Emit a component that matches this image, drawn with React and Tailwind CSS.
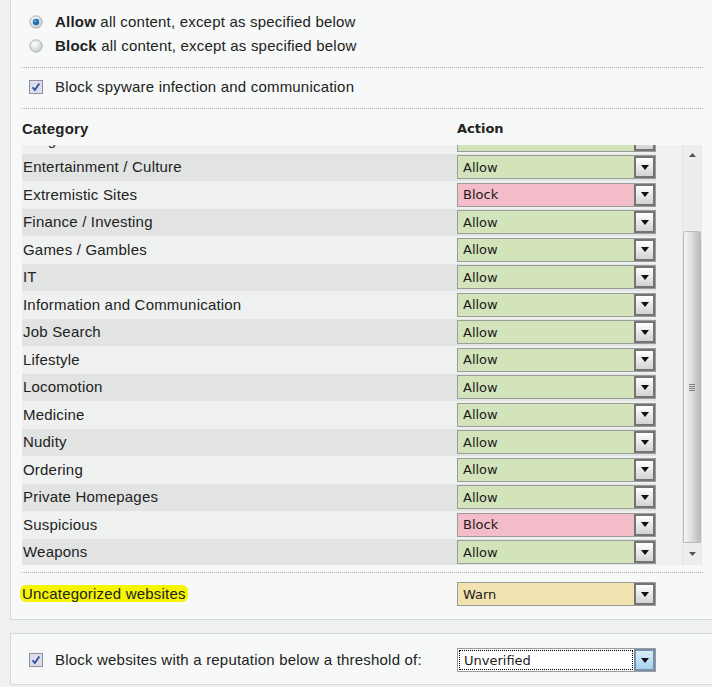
import React from 'react';

const rows = [
  ['Drugs', 'Allow'],
  ['Entertainment / Culture', 'Allow'],
  ['Extremistic Sites', 'Block'],
  ['Finance / Investing', 'Allow'],
  ['Games / Gambles', 'Allow'],
  ['IT', 'Allow'],
  ['Information and Communication', 'Allow'],
  ['Job Search', 'Allow'],
  ['Lifestyle', 'Allow'],
  ['Locomotion', 'Allow'],
  ['Medicine', 'Allow'],
  ['Nudity', 'Allow'],
  ['Ordering', 'Allow'],
  ['Private Homepages', 'Allow'],
  ['Suspicious', 'Block'],
  ['Weapons', 'Allow'],
  ['Weather', 'Allow'],
];

const selectBg = {
  Allow: 'bg-[#d3e4bb]',
  Block: 'bg-[#f2bcc8]',
  Warn: 'bg-[#f1e2b0]',
};

const Arrow = ({ blue }) => (
  <div
    className={
      blue
        ? 'w-[21px] h-full flex items-center justify-center border-2 border-[#7390ad] bg-gradient-to-b from-[#d9edf9] to-[#a7d2ef]'
        : 'w-[21px] h-full flex items-center justify-center border-2 border-[#747474] bg-gradient-to-b from-white to-[#d3d3d3]'
    }
  >
    <svg width="8" height="5" viewBox="0 0 8 5">
      <path d="M0 0H8L4 5Z" fill="#111" />
    </svg>
  </div>
);

const Select = ({ value }) => (
  <div className={`flex w-[199px] h-[24px] border border-[#9c9c9c] ${selectBg[value]}`}>
    <span className="flex-1 flex items-center pl-[5px] text-[13px] tracking-normal text-[#1a1a1a] font-['DejaVu_Sans',sans-serif] leading-none">
      {value}
    </span>
    <Arrow />
  </div>
);

const Radio = ({ on }) => (
  <svg width="14" height="14" viewBox="0 0 14 14">
    <defs>
      <radialGradient id={on ? 'rOn' : 'rOff'} cx="0.4" cy="0.35" r="0.7">
        <stop offset="0" stopColor="#ffffff" />
        <stop offset="1" stopColor="#c4c8cc" />
      </radialGradient>
    </defs>
    <circle cx="7" cy="7" r="6.2" fill={`url(#${on ? 'rOn' : 'rOff'})`} stroke="#a3a9ae" strokeWidth="0.8" />
    {on && <circle cx="7" cy="7" r="3.2" fill="#1f6fb2" />}
    {on && <circle cx="6.2" cy="6.2" r="1.1" fill="#7fb6e0" />}
  </svg>
);

const Check = () => (
  <svg width="14" height="14" viewBox="0 0 14 14">
    <rect x="0.5" y="0.5" width="13" height="13" fill="#e3e3ef" stroke="#8e8f9c" />
    <rect x="1.5" y="1.5" width="11" height="11" fill="#dcdcec" />
    <path d="M3.5 7.2L5.8 10L10.3 3.5" fill="none" stroke="#2f4fa3" strokeWidth="1.8" />
  </svg>
);

const Dotted = () => <div className="mr-[9px] border-t border-dotted border-[#a9a9a9]" />;

export default function App() {
  return (
    <div className="w-[712px] h-[687px] overflow-hidden bg-[#eef1ef] text-[15px] tracking-[0.2px] text-[#222] font-['Liberation_Sans',Arial,sans-serif]">
      {/* main panel */}
      <div className="ml-[10px] border-l border-b border-[#d6dad7] bg-[#f6f9f7] pl-[11px] pt-[10px] pb-[13px]">
        <div className="flex items-center h-[24px] pl-[7px]">
          <Radio on />
          <span className="ml-[12px]">
            <b>Allow</b> all content, except as specified below
          </span>
        </div>
        <div className="flex items-center h-[24px] pl-[7px]">
          <Radio />
          <span className="ml-[12px]">
            <b>Block</b> all content, except as specified below
          </span>
        </div>
        <div className="mt-[9px]">
          <Dotted />
        </div>
        <div className="flex items-center h-[24px] pl-[7px] mt-[7px] mb-[9px]">
          <Check />
          <span className="ml-[12px]">Block spyware infection and communication</span>
        </div>
        <Dotted />

        <div className="flex items-center h-[22px] mt-[9px] mb-[5px]">
          <span className="w-[435px] font-bold">Category</span>
          <span className="font-bold text-[13px] tracking-normal font-['DejaVu_Sans',sans-serif]">Action</span>
        </div>

        <div className="flex h-[420px] w-[680px] bg-[#eff2f0] overflow-hidden">
          <div className="w-[634px] overflow-hidden">
            <div className="mt-[-19px]">
              {rows.map(([name, action], i) => (
                <div
                  key={name}
                  className={`flex items-center h-[27.5px] ${i % 2 ? 'bg-[#e1e4e2]' : 'bg-[#eef1ef]'}`}
                >
                  <span className="w-[435px] pl-[1px]">{name}</span>
                  <Select value={action} />
                </div>
              ))}
            </div>
          </div>
          <div className="w-[26px]" />
          {/* scrollbar */}
          <div className="w-[20px] flex flex-col bg-[#eceeed] border-x border-[#e4e6e5]">
            <div className="h-[20px] flex items-center justify-center">
              <svg width="7" height="4" viewBox="0 0 7 4">
                <path d="M0 4H7L3.5 0Z" fill="#555" />
              </svg>
            </div>
            <div className="h-[66px]" />
            <div className="h-[312px] rounded-t-[3px] border border-[#b9bcbb] bg-gradient-to-r from-[#f4f4f4] via-[#dcdedd] to-[#b9bcbb] flex items-center justify-center">
              <div className="flex flex-col gap-[1px] w-[6px]">
                <div className="h-px bg-[#808080]" />
                <div className="h-px bg-[#808080]" />
                <div className="h-px bg-[#808080]" />
                <div className="h-px bg-[#808080]" />
              </div>
            </div>
            <div className="flex-1 flex items-center justify-center">
              <svg width="7" height="4" viewBox="0 0 7 4">
                <path d="M0 0H7L3.5 4Z" fill="#555" />
              </svg>
            </div>
          </div>
        </div>

        <div className="mt-[7px]">
          <Dotted />
        </div>

        <div className="flex items-center h-[24px] mt-[9px]">
          <div className="w-[435px]">
            <span className="bg-[#f5f500] rounded-[6px] px-[2px] -ml-[2px]">Uncategorized websites</span>
          </div>
          <Select value="Warn" />
        </div>
      </div>

      {/* reputation panel */}
      <div className="mt-[13px] ml-[10px] border-l border-t border-b border-[#d6dad7] bg-[#f6f9f7] pl-[11px] pt-[14px] pb-[12px]">
        <div className="flex items-center h-[24px]">
          <div className="w-[435px] flex items-center pl-[7px]">
            <Check />
            <span className="ml-[12px]">Block websites with a reputation below a threshold of:</span>
          </div>
          <div className="flex w-[199px] h-[24px] border border-[#9c9c9c] bg-white">
            <span className="flex-1 flex items-center pl-[4px] m-[1px] border border-dotted border-black text-[13px] tracking-normal text-[#1a1a1a] font-['DejaVu_Sans',sans-serif] leading-none">
              Unverified
            </span>
            <Arrow blue />
          </div>
        </div>
      </div>
    </div>
  );
}
